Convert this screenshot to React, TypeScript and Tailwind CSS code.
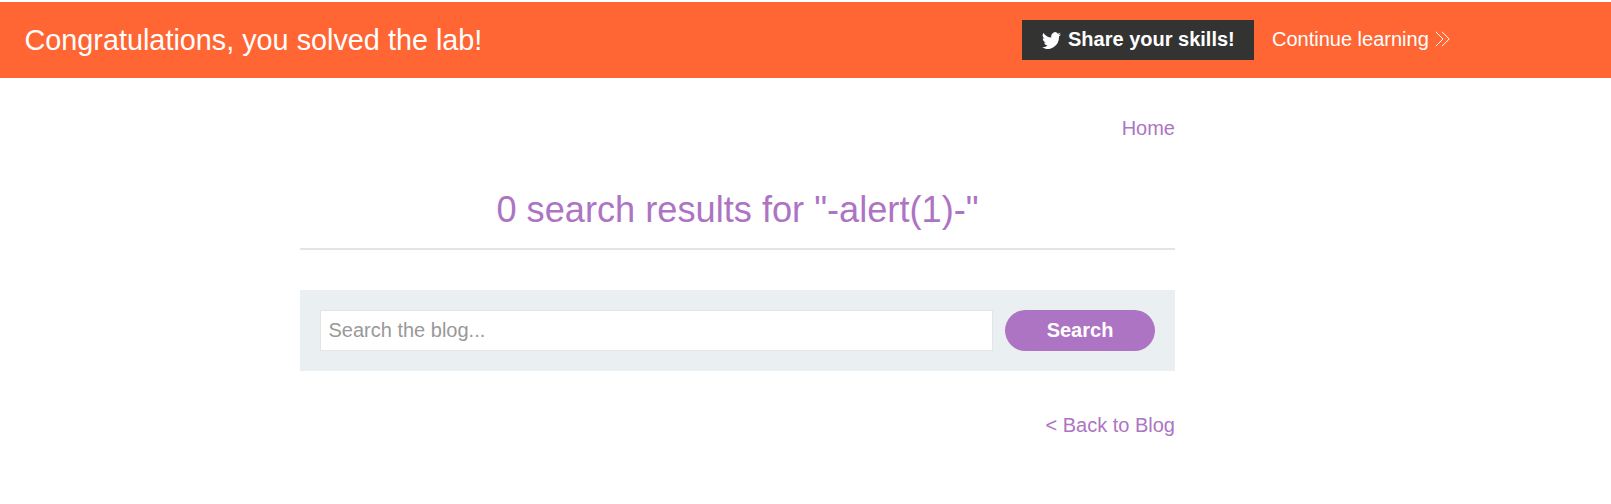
export default function App() {
  return (
    <div className="min-h-[504px] w-full bg-white pt-[2px] text-[20px] leading-[25px] text-[#ad74c3] [font-family:'Liberation_Sans',Arial,sans-serif]">
      <header className="flex h-[76px] bg-[#ff6633] pl-[24.5px] text-white">
        <p className="w-[997.5px] pt-[21px] text-[28.8px] leading-[34px]">Congratulations, you solved the lab!</p>
        <button className="mt-[18px] flex h-[40px] w-[232px] items-center bg-[#333332] pb-[2px] pl-[20px] font-bold whitespace-nowrap">
          <svg className="mt-[2px] mr-[7px] h-[17px] w-[19px] shrink-0" viewBox="0 2 24 19.7" preserveAspectRatio="none" fill="currentColor">
            <path d="M24 4.6a10 10 0 0 1-2.8.8 5 5 0 0 0 2.1-2.7 10 10 0 0 1-3.1 1.2 4.9 4.9 0 0 0-8.4 4.5A14 14 0 0 1 1.7 3.1a4.9 4.9 0 0 0 1.5 6.6 4.9 4.9 0 0 1-2.2-.6v.1a4.9 4.9 0 0 0 3.9 4.8 5 5 0 0 1-2.2.1 4.9 4.9 0 0 0 4.6 3.4A9.9 9.9 0 0 1 0 19.5a14 14 0 0 0 21.5-12.4A10 10 0 0 0 24 4.6z" />
          </svg>
          Share your skills!
        </button>
        <a className="mt-[25px] ml-[18px] flex h-[25px] whitespace-nowrap">
          Continue learning
          <svg className="mt-[4px] ml-[6px] h-[16px] w-[16px]" viewBox="0 0 16 16" fill="none" stroke="currentColor" strokeWidth="1">
            <path d="M.8.8 8 8 .8 15.2M7 .8 14.2 8 7 15.2" />
          </svg>
        </a>
      </header>
      <main className="ml-[300px] w-[875px]">
        <nav className="flex justify-end pt-[38px]">
          <a>Home</a>
        </nav>
        <h1 className="mt-[47px] h-[62px] border-b-2 border-[#e4e4e4] text-center text-[36.2px] leading-[44px]">
          0 search results for &quot;-alert(1)-&quot;
        </h1>
        <form className="mt-[40px] flex h-[81px] gap-[12px] bg-[#eaeff2] p-[20px]">
          <input
            className="h-[41px] w-[673px] border border-[#e4e4e4] bg-white px-[7.5px] placeholder:text-[#999999]"
            placeholder="Search the blog..."
          />
          <button type="button" className="h-[41px] w-[150px] rounded-full bg-[#ad74c3] font-bold text-white">
            Search
          </button>
        </form>
        <div className="mt-[42px] flex justify-end">
          <a>&lt; Back to Blog</a>
        </div>
      </main>
    </div>
  );
}
